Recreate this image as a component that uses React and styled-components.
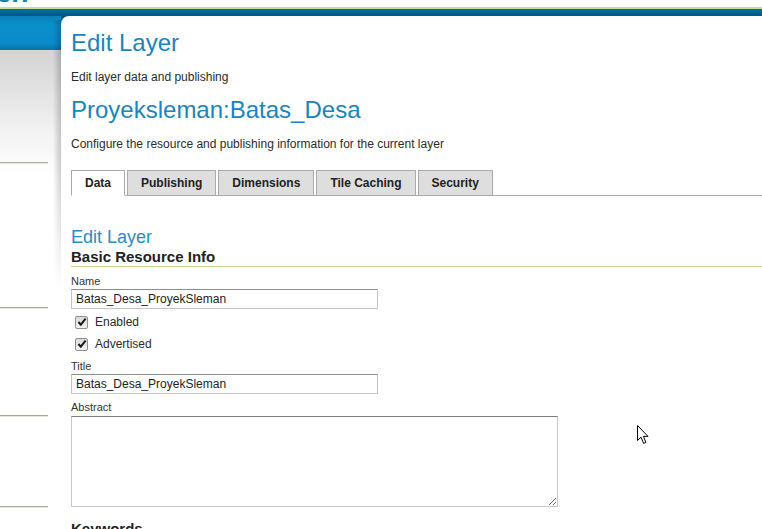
import React from 'react';
import styled, { createGlobalStyle } from 'styled-components';

const GlobalStyle = createGlobalStyle`
  html, body {
    margin: 0;
    padding: 0;
    background: #ffffff;
  }
  body {
    font-family: "Liberation Sans", Arial, sans-serif;
    color: #333333;
    overflow: hidden;
  }
`;

const tabs = ['Data', 'Publishing', 'Dimensions', 'Tile Caching', 'Security'];
const sideRules = [112, 143, 106, 89];

const App = () => {
  return (
    <Page>
      <GlobalStyle />
      <LogoStrip>
        <Logo>er.</Logo>
      </LogoStrip>
      <GreenLine />
      <BlueBar />
      <Body>
        <Sidebar>
          <SideHead />
          {sideRules.map((gap, i) => (
            <SideRule key={i} $gap={gap} />
          ))}
        </Sidebar>
        <Panel>
          <Title>Edit Layer</Title>
          <Lead $gap={12}>Edit layer data and publishing</Lead>
          <Title $gap={11}>Proyeksleman:Batas_Desa</Title>
          <Lead $gap={12}>Configure the resource and publishing information for the current layer</Lead>

          <TabStrip>
            {tabs.map((t, i) => (
              <Tab key={t} $active={i === 0}>{t}</Tab>
            ))}
          </TabStrip>

          <SubTitle>Edit Layer</SubTitle>
          <Section>Basic Resource Info</Section>

          <Label $gap={7}>Name</Label>
          <TextInput defaultValue="Batas_Desa_ProyekSleman" />

          <CheckRow $gap={5}>
            <CheckBox><CheckMark /></CheckBox>
            Enabled
          </CheckRow>
          <CheckRow $gap={6}>
            <CheckBox><CheckMark /></CheckBox>
            Advertised
          </CheckRow>

          <Label $gap={7}>Title</Label>
          <TextInput defaultValue="Batas_Desa_ProyekSleman" />

          <Label $gap={6}>Abstract</Label>
          <TextArea />

          <Keywords>Keywords</Keywords>
        </Panel>
      </Body>
      <Pointer />
    </Page>
  );
};

const CheckMark = () => (
  <svg width="10" height="10" viewBox="0 0 10 10">
    <path d="M1.4 5 L3.8 7.6 L8.6 1.6" fill="none" stroke="#1a1a1a" strokeWidth="2" />
  </svg>
);

const Pointer = () => (
  <Cursor width="13" height="20" viewBox="0 0 13 20">
    <path
      d="M0.5 0.5 L0.5 15.5 L4 12.2 L6.6 18.4 L8.9 17.4 L6.4 11.4 L11 11.4 Z"
      fill="#ffffff"
      stroke="#000000"
      strokeWidth="1"
    />
  </Cursor>
);

const Page = styled.div`
  position: relative;
  width: 762px;
  height: 529px;
  overflow: hidden;
`;

const LogoStrip = styled.div`
  height: 7px;
  overflow: hidden;
  background: #ffffff;
`;

const Logo = styled.div`
  margin: -21px 0 0 -3px;
  font-size: 28px;
  line-height: 28px;
  font-weight: bold;
  font-style: italic;
  color: #1482bb;
`;

const GreenLine = styled.div`
  height: 2px;
  background: #c6dc97;
`;

const BlueBar = styled.div`
  height: 7px;
  background: linear-gradient(#0073a0, #005779);
`;

const Body = styled.div`
  display: grid;
  grid-template-columns: 61px 1fr;
  background: linear-gradient(#005779 0, #005779 10px, #ffffff 10px);
`;

const Sidebar = styled.div`
  display: flex;
  flex-direction: column;
  background: linear-gradient(#d3d3d3 34px, #f4f4f4 120px, #ffffff 160px);
  height: 513px;
`;

const SideHead = styled.div`
  height: 34px;
  background: linear-gradient(#0a7fb6, #0b8fcc 25%, #0a8cc8 80%, #0a73a6);
`;

const SideRule = styled.div`
  width: 48px;
  margin-top: ${p => p.$gap}px;
  height: 1px;
  background: #a9ae95;
  border-bottom: 1px solid #e6e7de;
`;

const Panel = styled.div`
  position: relative;
  background: #ffffff;
  border-top-left-radius: 8px;
  padding: 13px 0 0 10px;

  &::before {
    content: "";
    position: absolute;
    left: -8px;
    top: 4px;
    width: 8px;
    height: 270px;
    background: linear-gradient(to right, rgba(0, 0, 0, 0), rgba(0, 0, 0, 0.2));
    -webkit-mask-image: linear-gradient(#000 55%, transparent);
    mask-image: linear-gradient(#000 55%, transparent);
  }
`;

const Title = styled.h1`
  margin: ${p => p.$gap || 0}px 0 0;
  font-size: 24px;
  line-height: 28px;
  font-weight: normal;
  color: #1a85bb;
`;

const Lead = styled.p`
  margin: ${p => p.$gap}px 0 0;
  font-size: 12px;
  line-height: 16px;
  color: #2b2b2b;
`;

const TabStrip = styled.div`
  display: flex;
  gap: 2px;
  margin-top: 18px;
  border-bottom: 1px solid #aaaaaa;
`;

const Tab = styled.div`
  height: 24px;
  padding: 0 13px;
  display: flex;
  align-items: center;
  font-size: 12px;
  font-weight: bold;
  color: #222222;
  background: ${p => (p.$active ? '#ffffff' : '#dedede')};
  border: 1px solid #aaaaaa;
  border-bottom: 1px solid ${p => (p.$active ? '#ffffff' : '#aaaaaa')};
  margin-bottom: -1px;
`;

const SubTitle = styled.h3`
  margin: 30px 0 0;
  font-size: 18px;
  line-height: 22px;
  font-weight: normal;
  color: #2a8cc2;
`;

const Section = styled.h4`
  margin: 0;
  font-size: 15px;
  line-height: 18px;
  font-weight: bold;
  color: #222222;
  border-bottom: 1px solid #c1dc92;
`;

const Label = styled.div`
  margin-top: ${p => p.$gap}px;
  font-size: 11px;
  line-height: 14px;
  color: #333333;
`;

const TextInput = styled.input`
  display: block;
  box-sizing: border-box;
  margin-top: 1px;
  width: 307px;
  height: 20px;
  padding: 0 4px;
  font-family: "Liberation Sans", Arial, sans-serif;
  font-size: 12px;
  color: #222222;
  border: 1px solid #c4c4c4;
  border-top-color: #8c8c8c;
  outline: none;
`;

const CheckRow = styled.label`
  display: flex;
  align-items: center;
  gap: 7px;
  height: 16px;
  margin-top: ${p => p.$gap}px;
  padding-left: 4px;
  font-size: 12px;
  color: #2b2b2b;
`;

const CheckBox = styled.span`
  box-sizing: border-box;
  width: 13px;
  height: 13px;
  display: flex;
  align-items: center;
  justify-content: center;
  border: 1px solid #8f8f8f;
  border-radius: 2px;
  background: linear-gradient(#dadada, #f2f2f2);
`;

const TextArea = styled.textarea`
  display: block;
  box-sizing: border-box;
  margin-top: 2px;
  width: 487px;
  height: 91px;
  border: 1px solid #c8c8c8;
  border-top-color: #7d7d7d;
  outline: none;
  font-family: "Liberation Sans", Arial, sans-serif;
  font-size: 12px;
`;

const Keywords = styled.h4`
  margin: 13px 0 0;
  font-size: 15px;
  line-height: 18px;
  font-weight: bold;
  color: #222222;
`;

const Cursor = styled.svg`
  position: absolute;
  left: 637px;
  top: 425px;
`;

export default App;
